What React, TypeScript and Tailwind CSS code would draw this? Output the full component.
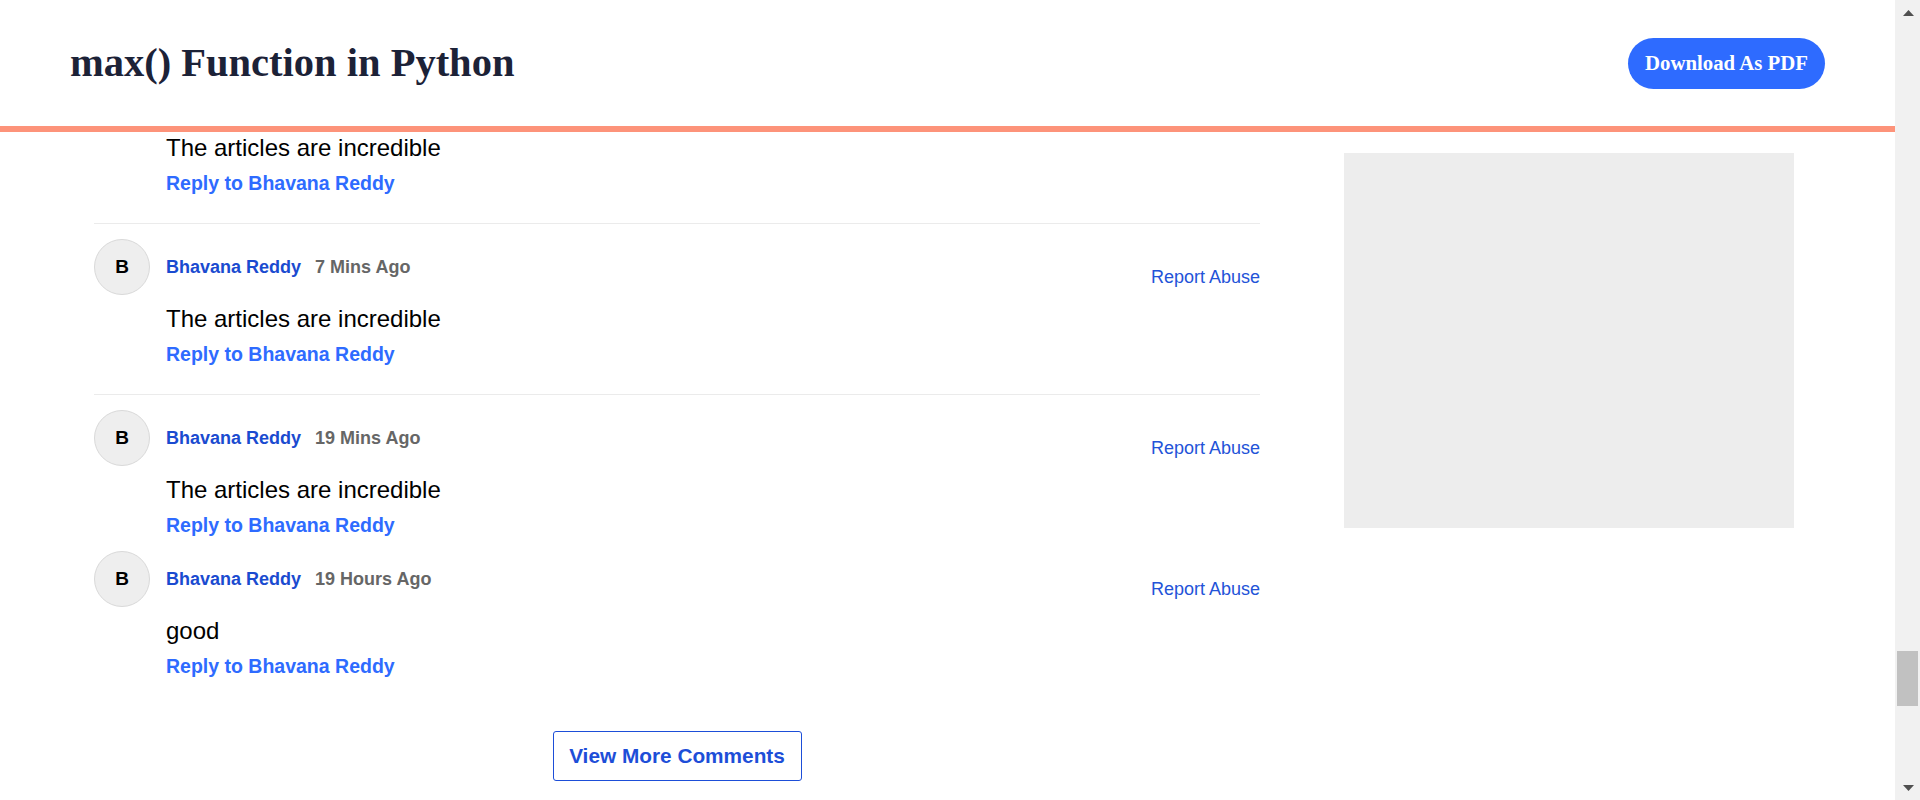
import React from "react";

interface Comment {
  id: number;
  author: string;
  time: string;
  text: string;
}

const comments: Comment[] = [
  { id: 2, author: "Bhavana Reddy", time: "7 Mins Ago", text: "The articles are incredible" },
  { id: 3, author: "Bhavana Reddy", time: "19 Mins Ago", text: "The articles are incredible" },
];

const reply: Comment = { id: 4, author: "Bhavana Reddy", time: "19 Hours Ago", text: "good" };

function CommentBody({ text, author }: { text: string; author: string }) {
  return (
    <div className="pl-[72px]">
      <p className="mt-[10px] text-[24px] leading-[28px] text-black">{text}</p>
      <a className="mt-[9px] block text-[19.5px] font-bold leading-[24px] text-[#2e6bff]">
        Reply to {author}
      </a>
    </div>
  );
}

function CommentItem({ comment, divider = true }: { comment: Comment; divider?: boolean }) {
  return (
    <div className={divider ? "border-t border-[#ebebeb] pt-[15px]" : ""}>
      <div className="flex h-14 items-center">
        <div className="flex h-14 w-14 shrink-0 items-center justify-center rounded-full border border-[#d9d9d9] bg-[#eeeeee] text-[19px] font-bold text-black">
          B
        </div>
        <div className="ml-4 flex flex-1 items-center leading-[21px]">
          <span className="text-[18px] font-bold text-[#1a4bd0]">{comment.author}</span>
          <span className="ml-[14px] text-[18px] font-bold text-[#666666]">{comment.time}</span>
        </div>
        <a className="mt-5 text-[18px] leading-[21px] text-[#2353d8]">Report Abuse</a>
      </div>
      <CommentBody text={comment.text} author={comment.author} />
    </div>
  );
}

function Scrollbar() {
  return (
    <div className="flex w-[25px] shrink-0 flex-col bg-[#f1f1f1]">
      <div className="flex h-[25px] items-center justify-center pl-[1px]">
        <svg width="11" height="6" viewBox="0 0 11 6">
          <path d="M5.5 0 L11 6 L0 6 Z" fill="#505050" />
        </svg>
      </div>
      <div className="flex-1">
        <div className="ml-[2px] mt-[626px] h-[55px] w-[21px] bg-[#c1c1c1]" />
      </div>
      <div className="flex h-[25px] items-center justify-center pl-[1px]">
        <svg width="11" height="6" viewBox="0 0 11 6">
          <path d="M0 0 L11 0 L5.5 6 Z" fill="#505050" />
        </svg>
      </div>
    </div>
  );
}

export default function App() {
  return (
    <div className="flex h-[800px] w-full overflow-hidden bg-white font-['Liberation_Sans',Arial,sans-serif]">
      <div className="flex min-w-0 flex-1 flex-col">
        <header className="flex h-[132px] shrink-0 items-center justify-between border-b-[6px] border-[#fd937a] pl-[70px] pr-[70px]">
          <h1 className="font-['Liberation_Serif','Times_New_Roman',serif] text-[40.5px] font-bold leading-none text-[#1c2237]">
            max() Function in Python
          </h1>
          <button className="h-[51px] w-[197px] rounded-full bg-[#2e6bff] font-['Liberation_Serif','Times_New_Roman',serif] text-[20.8px] font-bold text-white">
            Download As PDF
          </button>
        </header>

        <div className="flex flex-1 overflow-hidden">
          <main className="ml-[94px] w-[1166px] shrink-0">
            {/* first comment, partly scrolled under the header */}
            <div className="-mt-2 pb-7">
              <CommentBody text="The articles are incredible" author="Bhavana Reddy" />
            </div>

            <div className="pb-7">
              <CommentItem comment={comments[0]} />
            </div>
            <div className="pb-[14px]">
              <CommentItem comment={comments[1]} />
            </div>
            <CommentItem comment={reply} divider={false} />

            <div className="mt-[53px] flex justify-center">
              <button className="h-[50px] w-[249px] rounded-[3px] border border-[#1d4ed8] text-[20.8px] font-bold text-[#1d4ed8]">
                View More Comments
              </button>
            </div>
          </main>

          <aside className="ml-[84px] pt-[21px]">
            <div className="h-[375px] w-[450px] bg-[#ededed]" />
          </aside>
        </div>
      </div>
      <Scrollbar />
    </div>
  );
}
